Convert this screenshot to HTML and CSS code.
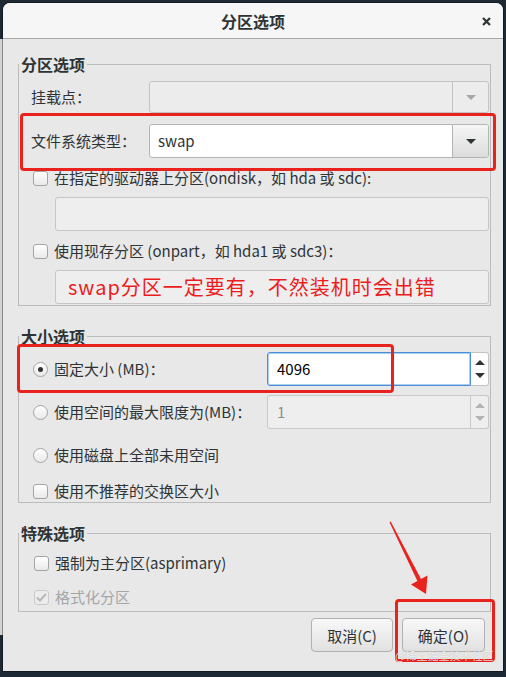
FILE: index.html
```html
<!DOCTYPE html>
<html lang="zh-CN">
<head>
    <meta charset="UTF-8">
    <title>分区选项</title>
    <link rel="stylesheet" href="styles.css">
</head>
<body>
<div class="screen">
    <div class="behind"></div>
    <div class="dialog">
        <div class="titlebar">
            <span></span>
            <span class="title">分区选项</span>
            <svg class="close" width="9" height="9" viewBox="0 0 9 9"><path d="M1 1L8 8M8 1L1 8" stroke="#2e3436" stroke-width="2.2"/></svg>
        </div>

        <div class="body">
            <fieldset class="group g1">
                <legend>分区选项</legend>
                <div class="group-body">
                    <div class="row r-mount">
                        <span class="lbl lbl-short">挂载点：</span>
                        <div class="combo combo-off">
                            <span class="combo-text"></span>
                            <span class="combo-btn"><i class="tri"></i></span>
                        </div>
                    </div>
                    <div class="row r-fs">
                        <span class="lbl lbl-short">文件系统类型：</span>
                        <div class="combo combo-on">
                            <span class="combo-text">swap</span>
                            <span class="combo-btn"><i class="tri"></i></span>
                        </div>
                    </div>
                    <div class="row opt r-disk">
                        <span class="check"></span>
                        <span class="opt-text">在指定的驱动器上分区(ondisk，如 hda 或 sdc):</span>
                    </div>
                    <div class="entry r-entry"></div>
                    <div class="row opt r-part">
                        <span class="check"></span>
                        <span class="opt-text">使用现存分区 (onpart，如 hda1 或 sdc3)：</span>
                    </div>
                    <div class="entry r-entry"><span class="note">swap分区一定要有，不然装机时会出错</span></div>
                </div>
            </fieldset>

            <fieldset class="group g2">
                <legend>大小选项</legend>
                <div class="group-body">
                    <div class="row r-fixed">
                        <span class="lbl lbl-long"><span class="radio on"></span><span class="opt-text">固定大小 (MB)：</span></span>
                        <div class="spin spin-focus">
                            <span class="spin-field">4096</span>
                            <span class="spin-btns"><i class="tri-up"></i><i class="tri"></i></span>
                        </div>
                    </div>
                    <div class="row r-max">
                        <span class="lbl lbl-long"><span class="radio"></span><span class="opt-text">使用空间的最大限度为(MB)：</span></span>
                        <div class="spin spin-off">
                            <span class="spin-field">1</span>
                            <span class="spin-btns"><i class="tri-up"></i><i class="tri"></i></span>
                        </div>
                    </div>
                    <div class="row opt r-all">
                        <span class="radio"></span>
                        <span class="opt-text">使用磁盘上全部未用空间</span>
                    </div>
                    <div class="row opt r-swap">
                        <span class="check"></span>
                        <span class="opt-text">使用不推荐的交换区大小</span>
                    </div>
                </div>
            </fieldset>

            <fieldset class="group g3">
                <legend>特殊选项</legend>
                <div class="group-body">
                    <div class="row opt r-primary">
                        <span class="check"></span>
                        <span class="opt-text">强制为主分区(asprimary)</span>
                    </div>
                    <div class="row opt r-format off">
                        <span class="check checked"><svg width="11" height="9" viewBox="0 0 11 9"><path d="M1 4.5L4 7.5L10 1" fill="none" stroke="#b7b7b7" stroke-width="2"/></svg></span>
                        <span class="opt-text">格式化分区</span>
                    </div>
                </div>
            </fieldset>

            <div class="actions">
                <button class="btn btn-cancel">取消(C)</button>
                <button class="btn btn-ok">确定(O)</button>
            </div>
        </div>

        <!-- annotations drawn over the screenshot -->
        <div class="mark mark-fs"></div>
        <div class="mark mark-size"></div>
        <div class="mark mark-ok"></div>
        <svg class="arrow" width="500" height="668" viewBox="0 0 500 668">
            <polygon points="386.5,519.2 387.7,518.6 418,576 424.5,572.6 423,591 408,581.5 414.4,578" fill="#e8231d"/>
        </svg>
        <span class="watermark">@稀土掘金技术社区</span>
    </div>
</div>
</body>
</html>
```

FILE: styles.css
```css
body {
    margin: 0;
    background: #1d2a35;
    font-family: "Noto Sans CJK SC", "DejaVu Sans", sans-serif;
    color: #2e3436;
}
.screen {
    display: flex;
    width: 506px;
    height: 677px;
    overflow: hidden;
}
.behind {
    flex: none;
    width: 3px;
    height: 596px;
    margin-top: 39px;
    background: #d2d2d2;
}
.dialog {
    position: relative;
    flex: none;
    width: 500px;
    height: 668px;
    margin-top: 3px;
    background: #e8e8e8;
    border-radius: 7px 7px 0 0;
    box-shadow: 0 0 0 1px rgba(0, 0, 0, 0.35);
}
.titlebar {
    display: grid;
    grid-template-columns: 1fr auto 1fr;
    align-items: center;
    height: 35px;
    background: #f6f6f6;
    border-bottom: 1px solid #a9a9a9;
    border-radius: 7px 7px 0 0;
}
.title {
    font-size: 16px;
    font-weight: bold;
    line-height: 20px;
    margin-top: 1px;
}
.close {
    justify-self: end;
    margin-right: 12px;
    margin-top: 1px;
}

.body {
    padding: 0 12px 0 15px;
}
.group {
    margin: 15px 0 0;
    padding: 0;
    border: 1px solid #bcbcbc;
    min-width: 0;
}
.group legend {
    padding: 0 2px;
    font-size: 16px;
    font-weight: bold;
    line-height: 20px;
}
.g2, .g3 {
    margin-top: 20px;
}
.group-body {
    padding: 7px 1px 1px 12px;
}
.g2 .group-body {
    padding-top: 6px;
}
.g3 .group-body {
    padding-top: 10px;
    padding-bottom: 4px;
}

.row {
    display: flex;
    align-items: center;
    font-size: 15px;
    line-height: 20px;
}
.opt {
    height: 20px;
}
.lbl {
    flex: none;
    display: flex;
    align-items: center;
}
.lbl-short {
    width: 118px;
}
.lbl-long {
    width: 236px;
}
.r-fs { margin-top: 11px; }
.r-disk, .r-part { margin-top: 10px; }
.r-max { margin-top: 9px; }
.r-all { margin-top: 16px; }
.r-swap { margin-top: 16px; }
.r-format { margin-top: 14px; }

.opt-text {
    margin-left: 6px;
    white-space: nowrap;
}
.off .opt-text {
    color: #a3a6a7;
}

.check, .radio {
    flex: none;
    box-sizing: border-box;
    width: 15px;
    height: 15px;
    margin-left: 2px;
    border: 1px solid #a4a4a4;
    background: linear-gradient(#ffffff, #e9e9e9);
    display: flex;
    align-items: center;
    justify-content: center;
}
.check {
    border-radius: 3px;
}
.g3 .check {
    margin-left: 3px;
}
.check.checked {
    border-color: #cacaca;
    background: #ececec;
}
.radio {
    border-radius: 50%;
}
.radio.on::after {
    content: "";
    width: 5px;
    height: 5px;
    border-radius: 50%;
    background: #2e3436;
}

.combo {
    flex: 1;
    display: flex;
    box-sizing: border-box;
    height: 32px;
    border: 1px solid #c3c3c3;
    border-radius: 3px;
    background: #ececec;
}
.combo-on {
    height: 34px;
    background: #ffffff;
    border-color: #b4b4b4;
}
.combo-text {
    flex: 1;
    display: flex;
    align-items: center;
    padding-left: 8px;
    font-size: 15px;
}
.combo-btn {
    width: 35px;
    display: flex;
    align-items: center;
    justify-content: center;
    border-left: 1px solid #c3c3c3;
}
.combo-on .combo-btn {
    border-left-color: #b4b4b4;
    background: linear-gradient(#f6f6f6, #dcdcdc);
    border-radius: 0 2px 2px 0;
}
.tri, .tri-up {
    width: 0;
    height: 0;
    border-left: 5px solid transparent;
    border-right: 5px solid transparent;
}
.tri {
    border-top: 5px solid #2e3436;
}
.tri-up {
    border-bottom: 5px solid #2e3436;
}
.combo-off .tri {
    border-top-color: #a6a6a6;
}

.entry {
    box-sizing: border-box;
    height: 34px;
    margin: 9px 0 0 24px;
    border: 1px solid #c6c6c6;
    border-radius: 3px;
    background: #eeeeee;
    display: flex;
    align-items: center;
}
.note {
    padding-left: 12px;
    font-size: 20px;
    line-height: 26px;
    color: #ec1c1c;
    letter-spacing: 1px;
}

.spin {
    flex: 1;
    display: flex;
    height: 34px;
}
.spin-field {
    flex: 1;
    display: flex;
    align-items: center;
    padding-left: 9px;
    font-size: 15px;
    border: 1px solid #4a90d9;
    box-shadow: inset 0 0 0 1px rgba(74, 144, 217, 0.45);
    border-radius: 3px 0 0 3px;
    background: #ffffff;
    color: #000000;
}
.spin-btns {
    width: 17px;
    display: flex;
    flex-direction: column;
    align-items: center;
    justify-content: space-evenly;
    border: 1px solid #c3c3c3;
    border-left: none;
    border-radius: 0 3px 3px 0;
    background: #ffffff;
}
.spin-off .spin-field {
    border-color: #c8c8c8;
    box-shadow: none;
    background: #eeeeee;
    color: #8d9091;
}
.spin-off .spin-btns {
    border-color: #c8c8c8;
    background: #eeeeee;
}
.spin-off .tri { border-top-color: #b3b3b3; }
.spin-off .tri-up { border-bottom-color: #b3b3b3; }

.actions {
    display: flex;
    justify-content: flex-end;
    gap: 9px;
    margin: 6px 6px 0 0;
}
.btn {
    height: 34px;
    border: 1px solid #b1b1b1;
    border-radius: 4px;
    background: linear-gradient(#f8f8f8, #e1e1e1);
    font-family: "Noto Sans CJK SC", "DejaVu Sans", sans-serif;
    font-size: 15px;
    color: #2e3436;
    padding: 0;
}
.btn-cancel { width: 82px; }
.btn-ok { width: 83px; }

.mark {
    position: absolute;
    box-sizing: border-box;
    border: 3px solid #e8231d;
    border-radius: 4px;
}
.mark-fs { left: 17px; top: 110px; width: 476px; height: 58px; }
.mark-size { left: 14px; top: 341px; width: 377px; height: 49px; }
.mark-ok { left: 392px; top: 596px; width: 100px; height: 63px; }
.arrow {
    position: absolute;
    left: 0;
    top: 0;
    pointer-events: none;
}
.watermark {
    position: absolute;
    left: 392px;
    top: 642px;
    font-size: 11px;
    line-height: 20px;
    color: rgba(255, 255, 255, 0.85);
    text-shadow: 0 0 1px rgba(0, 0, 0, 0.3);
}
```
